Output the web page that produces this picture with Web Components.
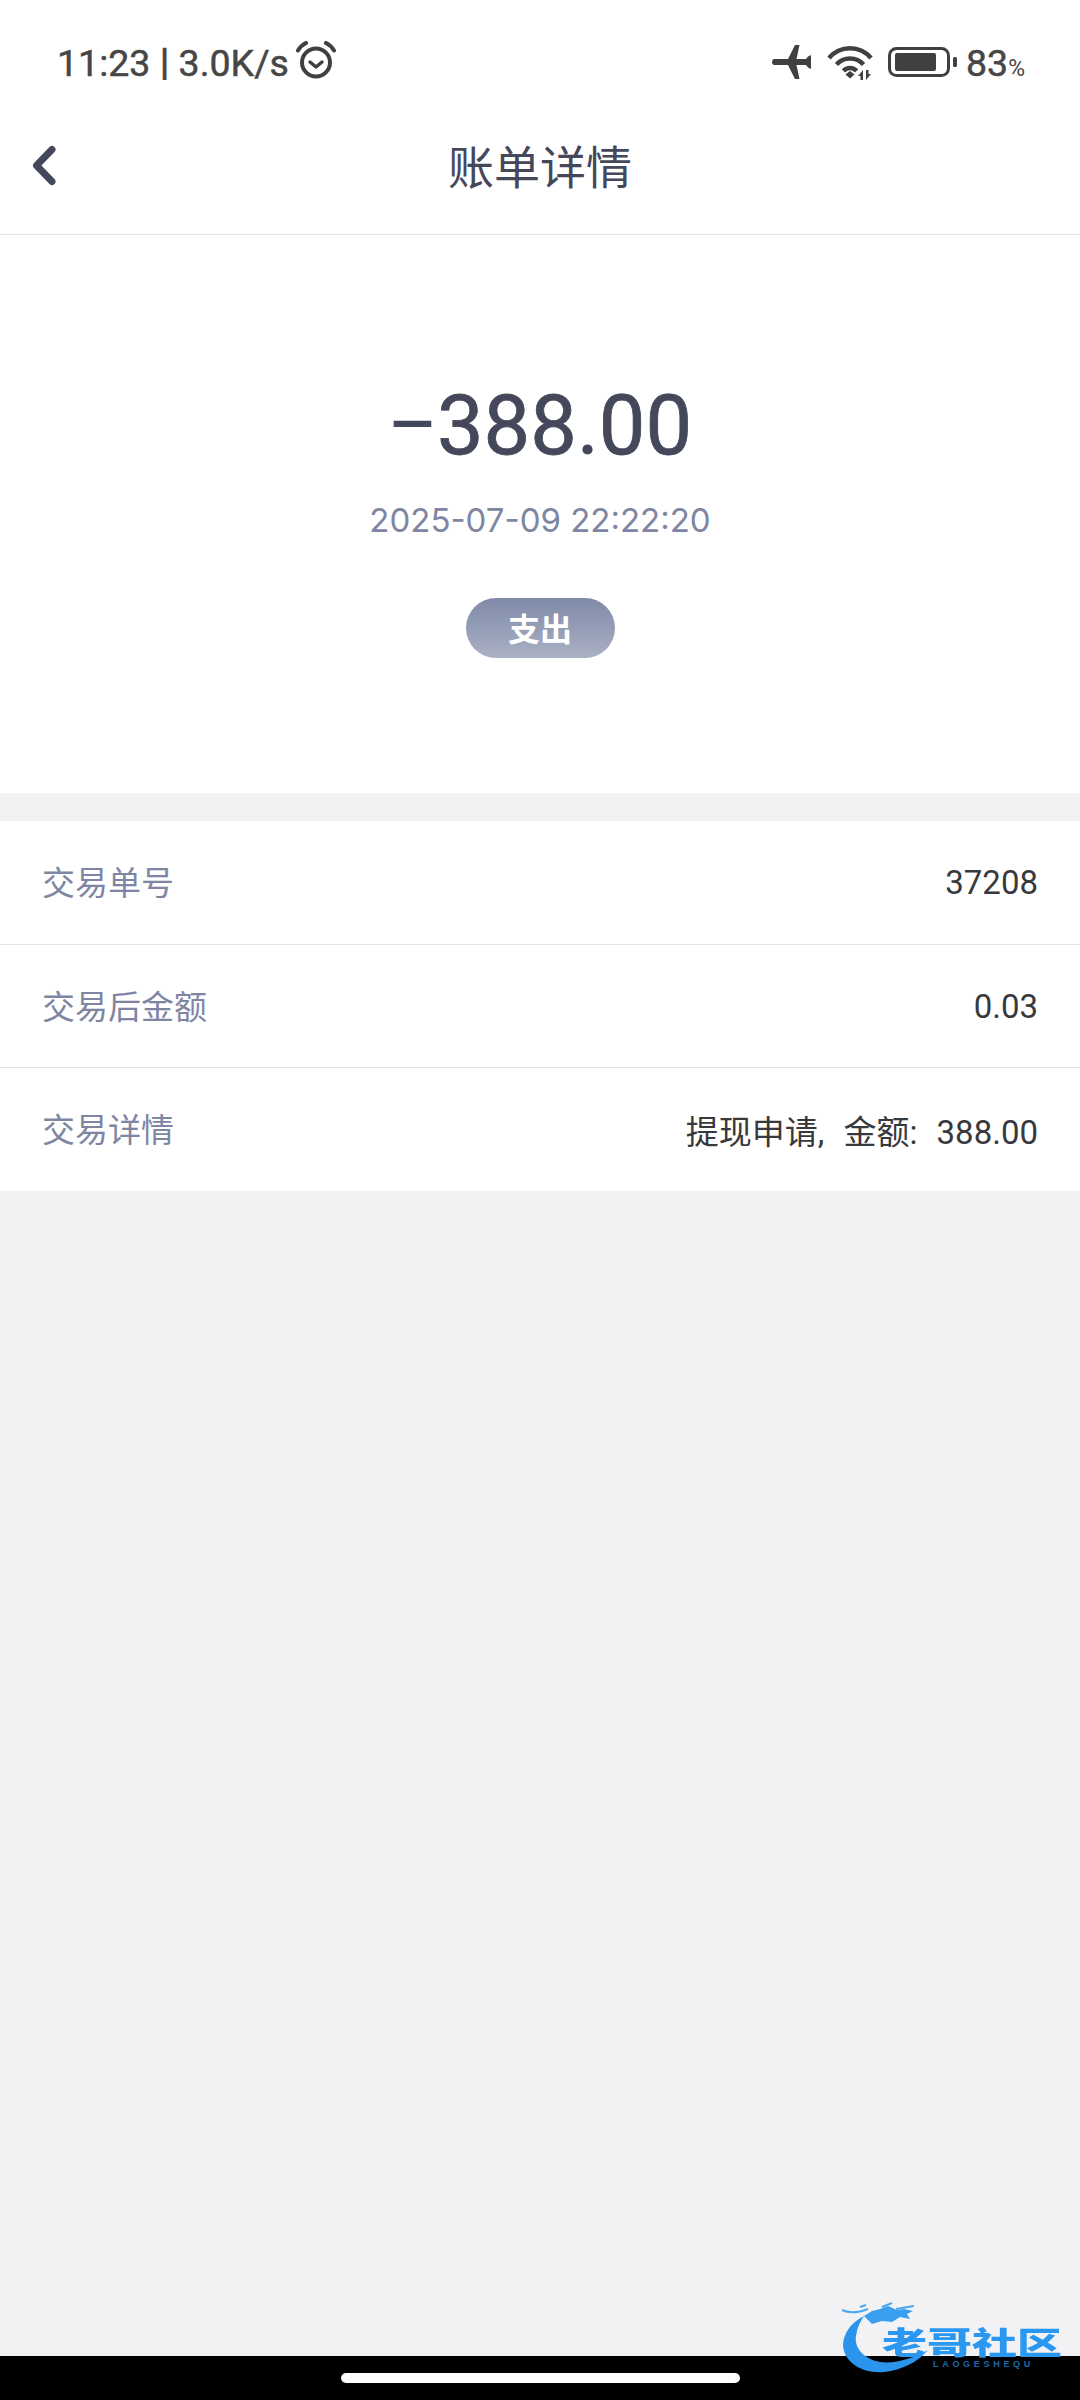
<!DOCTYPE html>
<html lang="zh">
<head>
<meta charset="utf-8">
<title>账单详情</title>
<style>
  html, body { margin: 0; height: 100%; }
  body { background: #f2f2f5; font-family: Inter, "Noto Sans CJK SC", sans-serif; }
  #page { height: 2400px; display: flex; flex-direction: column; position: relative; overflow: hidden; }
</style>
</head>
<body>
<div id="page">
  <status-bar></status-bar>
  <nav-bar>账单详情</nav-bar>
  <bill-hero amount="388.00" sign="-" time="2025-07-09 22:22:20" tag="支出"></bill-hero>
  <bill-list>
    <bill-row label="交易单号">37208</bill-row>
    <bill-row label="交易后金额">0.03</bill-row>
    <bill-row label="交易详情">提现申请, 金额: 388.00</bill-row>
  </bill-list>
  <home-bar></home-bar>
  <site-mark></site-mark>
</div>

<script>
const statusBarTemplate = document.createElement('template');
statusBarTemplate.innerHTML = `
<style>
  :host {
    display: flex;
    align-items: center;
    justify-content: space-between;
    box-sizing: border-box;
    height: 80px;
    padding: 46px 55px 0 57px;
    background: #fff;
    color: #464646;
    font-family: Roboto, sans-serif;
  }
  .left, .right { display: flex; align-items: center; height: 40px; }
  .clock { font-size: 37.500px; -webkit-text-stroke: .5px #464646; white-space: nowrap; }
  .clock b { font-size: 38px; font-weight: 700; }
  .alarm { margin-left: 7px; margin-top: -6px; }
  .plane { margin-right: 15px; margin-top: -2px; }
  .wifi { margin-right: 15px; margin-top: -2px; }
  .battery { margin-right: 9px; margin-top: -2px; }
  .pct { font-size: 37.500px; -webkit-text-stroke: .5px #464646; white-space: nowrap; }
  .pct small { font-size: 23px; -webkit-text-stroke: 0; }
  svg { display: block; }
</style>
<div class="left">
  <span class="clock">11:23 <b>|</b> 3.0K/s</span>
  <svg class="alarm" width="40" height="38" viewBox="0 0 40 38" fill="none" stroke="#404040" stroke-linecap="round">
    <circle cx="20" cy="21.5" r="14" stroke-width="4"/>
    <path d="M14 21l6 5 6-5" stroke-width="3.5" stroke-linejoin="round"/>
    <path d="M2 9.500C4 6 7 3.500 10 2M38 9.500C36 6 33 3.500 30 2" stroke-width="4"/>
  </svg>
</div>
<div class="right">
  <svg class="plane" width="40" height="34" viewBox="0 0 40 34" fill="#404040">
    <path d="M2.500 14h13.500L23 0h4.500L24.500 14H34l2-2.500 3-1.500v14l-3-1.500-2-2.500H24.500L27.500 34H23L16 20H2.500C.8 20 0 18.500 0 17s.8-3 2.500-3z"/>
  </svg>
  <svg class="wifi" width="46" height="35" viewBox="0 0 46 35" fill="none" stroke="#404040" stroke-width="4.500">
    <path d="M2 13C13 0 33 0 44 13"/>
    <path d="M9.500 19.500C16.500 11.500 29.500 11.500 36.500 19.500"/>
    <path d="M16.500 26C20 22 26 22 29.500 26"/>
    <path d="M18.500 29.500l4.500-3.500 4.500 3.500-4.500 4z" fill="#404040" stroke="none"/>
    <path d="M31 31l5-6v10h-2.500v-4zM44 29l-5 6v-10h2.500v4z" fill="#404040" stroke="none"/>
  </svg>
  <svg class="battery" width="69" height="30" viewBox="0 0 69 30">
    <rect x="1.500" y="1.500" width="59" height="27" rx="7" fill="none" stroke="#404040" stroke-width="3"/>
    <rect x="7" y="6" width="41" height="18" rx="2" fill="#404040"/>
    <rect x="65" y="10" width="4" height="10" rx="1.500" fill="#404040"/>
  </svg>
  <span class="pct">83<small>%</small></span>
</div>`;

class StatusBar extends HTMLElement {
  constructor() {
    super();
    this.attachShadow({ mode: 'open' });
    this.shadowRoot.appendChild(statusBarTemplate.content.cloneNode(true));
  }
}
customElements.define('status-bar', StatusBar);

const navBarTemplate = document.createElement('template');
navBarTemplate.innerHTML = `
<style>
  :host {
    display: flex;
    align-items: center;
    justify-content: center;
    height: 154px;
    position: relative;
    background: #fff;
    border-bottom: 1px solid #e4e4e6;
    color: #45485a;
    font-family: "Noto Sans CJK SC", sans-serif;
    font-size: 46px;
  }
  .back { position: absolute; left: 31px; top: 65px; }
  .title { margin-top: 14px; }
</style>
<svg class="back" width="25" height="41" viewBox="0 0 25 41" fill="none" stroke="#45485a" stroke-width="7" stroke-linecap="round" stroke-linejoin="round">
  <path d="M21 4.500L5.500 20.500 21 36.500"/>
</svg>
<span class="title"><slot></slot></span>`;

class NavBar extends HTMLElement {
  constructor() {
    super();
    this.attachShadow({ mode: 'open' });
    this.shadowRoot.appendChild(navBarTemplate.content.cloneNode(true));
  }
}
customElements.define('nav-bar', NavBar);

const billHeroTemplate = document.createElement('template');
billHeroTemplate.innerHTML = `
<style>
  :host {
    display: flex;
    flex-direction: column;
    align-items: center;
    height: 558px;
    background: #fff;
    font-family: Inter, "Noto Sans CJK SC", sans-serif;
  }
  .amount {
    margin-top: 149px;
    font-family: Roboto, sans-serif;
    font-size: 83px;
    line-height: 84px;
    color: #45485a;
    white-space: nowrap;
  }
  .num { -webkit-text-stroke: .8px #45485a; }
  /* the hyphen in the design is as wide as a minus */
  .sign {
    display: inline-block;
    width: 49px;
    text-align: center;
    transform: translateY(-5px) scaleX(1.9);
  }
  .time { margin-top: 32px; font-size: 33px; line-height: 40px; color: #7f86a3; }
  .tag {
    margin-top: 58px;
    width: 149px;
    height: 60px;
    border-radius: 30px;
    background: linear-gradient(180deg, #7f8aa8, #abb1c4);
    color: #fff;
    font-family: "Noto Sans CJK SC", sans-serif;
    font-size: 32px;
    font-weight: 700;
    line-height: 58px;
    text-align: center;
  }
</style>
<div class="amount"><span class="sign"></span><span class="num"></span></div>
<div class="time"></div>
<div class="tag"></div>`;

class BillHero extends HTMLElement {
  constructor() {
    super();
    this.attachShadow({ mode: 'open' });
    this.shadowRoot.appendChild(billHeroTemplate.content.cloneNode(true));
  }

  connectedCallback() {
    this.shadowRoot.querySelector('.sign').textContent = this.getAttribute('sign');
    this.shadowRoot.querySelector('.num').textContent = this.getAttribute('amount');
    this.shadowRoot.querySelector('.time').textContent = this.getAttribute('time');
    this.shadowRoot.querySelector('.tag').textContent = this.getAttribute('tag');
  }
}
customElements.define('bill-hero', BillHero);

const billListTemplate = document.createElement('template');
billListTemplate.innerHTML = `
<style>
  :host { display: block; margin-top: 28px; background: #fff; }
  ::slotted(bill-row:first-child) { height: 124px; }
  ::slotted(bill-row:last-child) { border-bottom: 0; }
</style>
<slot></slot>`;

class BillList extends HTMLElement {
  constructor() {
    super();
    this.attachShadow({ mode: 'open' });
    this.shadowRoot.appendChild(billListTemplate.content.cloneNode(true));
  }
}
customElements.define('bill-list', BillList);

const billRowTemplate = document.createElement('template');
billRowTemplate.innerHTML = `
<style>
  :host {
    display: flex;
    align-items: center;
    justify-content: space-between;
    box-sizing: border-box;
    height: 123px;
    padding: 0 42px;
    border-bottom: 1px solid #e4e4e6;
    font-family: Roboto, "Noto Sans CJK SC", sans-serif;
    font-size: 33px;
  }
  .label { color: #7f86a3; font-family: "Noto Sans CJK SC", sans-serif; padding-bottom: 3px; }
  .value { color: #38393d; word-spacing: 11px; }
</style>
<span class="label"></span>
<span class="value"><slot></slot></span>`;

class BillRow extends HTMLElement {
  constructor() {
    super();
    this.attachShadow({ mode: 'open' });
    this.shadowRoot.appendChild(billRowTemplate.content.cloneNode(true));
  }

  connectedCallback() {
    this.shadowRoot.querySelector('.label').textContent = this.getAttribute('label');
  }
}
customElements.define('bill-row', BillRow);

const homeBarTemplate = document.createElement('template');
homeBarTemplate.innerHTML = `
<style>
  :host {
    display: flex;
    justify-content: center;
    box-sizing: border-box;
    height: 44px;
    margin-top: auto;
    padding-top: 17px;
    background: #000;
  }
  .pill { width: 399px; height: 10px; border-radius: 5px; background: #fff; }
</style>
<div class="pill"></div>`;

class HomeBar extends HTMLElement {
  constructor() {
    super();
    this.attachShadow({ mode: 'open' });
    this.shadowRoot.appendChild(homeBarTemplate.content.cloneNode(true));
  }
}
customElements.define('home-bar', HomeBar);

// watermark sits over the bottom right corner, so it is the one absolute block
const siteMarkTemplate = document.createElement('template');
siteMarkTemplate.innerHTML = `
<style>
  :host {
    position: absolute;
    right: 0;
    bottom: 0;
    width: 300px;
    height: 120px;
  }
  svg { position: absolute; left: 0; top: 0; filter: blur(.5px); }
  .name {
    position: absolute;
    left: 102px;
    top: 46px;
    width: 184px;
    font-family: "Noto Sans CJK SC", sans-serif;
    font-weight: 900;
    font-size: 45px;
    line-height: 30px;
    white-space: nowrap;
    color: #2a97f0;
    transform: scaleY(.68);
    filter: blur(.5px);
  }
  .pinyin {
    position: absolute;
    left: 153px;
    top: 79px;
    font-family: "Liberation Sans", sans-serif;
    font-weight: 700;
    font-size: 9px;
    line-height: 10px;
    letter-spacing: 3.700px;
    color: #1d6aa8;
    white-space: nowrap;
  }
</style>
<svg width="300" height="120" viewBox="0 0 300 120">
  <path d="M84 36C72 42 64 52 63 64 63 82 82 94 104 92 122 90 138 82 148 70 134 78 116 84 100 82 84 79 74 68 76 56 77 48 80 42 84 36z" fill="#2b95ee"/>
  <path d="M84 36L92 31 100 29 108 26 117 30 124 29 133 31 127 34 130 39 120 37 112 42 102 41 92 44z" fill="#3b9fef"/>
  <path d="M62 30C70 34 80 32 88 29M80 27l6-2M102 27l10-4M116 29l18-3" stroke="#4aa8f2" stroke-width="2" fill="none"/>
</svg>
<div class="name">老哥社区</div>
<div class="pinyin">LAOGESHEQU</div>`;

class SiteMark extends HTMLElement {
  constructor() {
    super();
    this.attachShadow({ mode: 'open' });
    this.shadowRoot.appendChild(siteMarkTemplate.content.cloneNode(true));
  }
}
customElements.define('site-mark', SiteMark);
</script>
</body>
</html>
